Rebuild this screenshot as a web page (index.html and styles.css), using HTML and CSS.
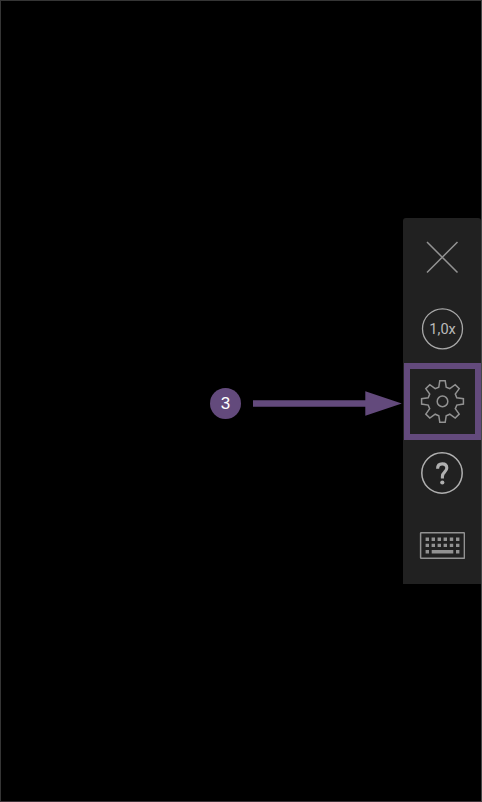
FILE: index.html
```html
<!DOCTYPE html>
<html lang="en">
<head>
<meta charset="utf-8">
<title>Toolbar</title>
<link rel="stylesheet" href="styles.css">
</head>
<body>
<main class="screen">
  <div class="callout">
    <span class="step">3</span>
    <svg class="arrow" width="149" height="25" viewBox="0 0 149 25"><path d="M0 9.2H112.3V0.3L148.8 12.5 112.3 24.7V15.8H0Z"/></svg>
  </div>
  <nav class="toolbar">
    <button class="tool" aria-label="Close">
      <svg width="46" height="46" viewBox="-23 -23 46 46"><path d="M-15 -15L15.5 15.5M15.5 -15L-15 15.5"/></svg>
    </button>
    <button class="tool">
      <svg class="zoom" width="46" height="46" viewBox="-23 -23 46 46"><circle cx=".5" cy="-.2" r="20"/><text x=".6" y="5">1,0x</text></svg>
    </button>
    <button class="tool selected" aria-label="Settings">
      <svg width="46" height="46" viewBox="-23 -23 46 46"><g transform="translate(.5 .4)"><path d="M-2.7-20.7H2.7L3.7-14.3 7.3-12.8 12.7-16.7 16.7-12.7 12.8-7.3 14.3-3.7 20.9-2.7V2.7L14.3 3.7 12.8 7.3 16.7 12.7 12.7 16.7 7.3 12.8 3.7 14.3 2.7 20.9H-2.7L-3.7 14.3-7.3 12.8-12.7 16.7-16.7 12.7-12.8 7.3-14.3 3.7-20.9 2.7V-2.7L-14.3-3.7-12.8-7.3-16.7-12.7-12.7-16.7-7.3-12.8-3.7-14.3Z"/><circle r="5.3"/></g></svg>
    </button>
    <button class="tool" aria-label="Help">
      <svg class="help" width="46" height="46" viewBox="-23 -23 46 46"><circle cx="0" cy="0" r="20.2"/><path class="mark" d="M-4.4-4.2C-4.4-7.3-2.5-9.1.3-9.1S4.8-7.4 4.8-4.9C4.8-1.2.4-1 .4 3.4V5.4"/><circle class="dot" cx=".3" cy="9.5" r="2.1"/></svg>
    </button>
    <button class="tool" aria-label="Keyboard">
      <svg width="46" height="46" viewBox="-23 -23 46 46"><rect x="-21.4" y="-12.3" width="43.8" height="25.6" rx=".6"/><path class="keys" d="M-16.4-5.7h3.4m2.6 0h3.4m2.6 0h3.4m2.6 0h3.4m2.8 0h3.4m2.8 0h3.4M-16.4.4h3.4m2.6 0h3.4m2.6 0h3.4m2.6 0h3.4m2.8 0h3.4m2.8 0h3.4M-16.4 6.7h3.4m2.7 0h21.6m2.7 0h3.4"/></svg>
    </button>
  </nav>
</main>
</body>
</html>
```
FILE: styles.css
```css
* { box-sizing: border-box; }
body { margin: 0; background: #000; }
.screen {
  width: 482px;
  height: 802px;
  display: flex;
  align-items: center;
  justify-content: flex-end;
  border: 1px solid #353535;
  border-right-color: #454747;
  border-bottom-color: #3c3238;
  background: #000;
}
.callout {
  display: flex;
  align-items: center;
  gap: 12px;
  margin-right: 1px;
  padding-top: 5px;
}
.step {
  width: 31px;
  height: 31px;
  border-radius: 50%;
  background: #634a7c;
  color: #fff;
  font: 17px/31px "Liberation Sans", Arial, sans-serif;
  text-align: center;
}
.arrow { display: block; fill: #634a7c; }
.toolbar {
  width: 78px;
  height: 366px;
  padding: 3px 0;
  border-radius: 3px 3px 0 0;
  background: #212121;
}
.tool {
  position: relative;
  display: flex;
  align-items: center;
  justify-content: center;
  width: 78px;
  height: 72px;
  margin: 0;
  padding: 0;
  border: 0;
  background: none;
}
.tool svg {
  display: block;
  fill: none;
  stroke: #929292;
  stroke-width: 1.5;
}
.tool .zoom { stroke: #a8a8a8; stroke-width: 1.3; }
.zoom text {
  fill: #bababa;
  stroke: none;
  font: 400 14.6px Roboto, sans-serif;
  text-anchor: middle;
}
.selected::after {
  content: "";
  position: absolute;
  inset: -2px 0 -3px 1px;
  border: 6px solid #634a7c;
}
.tool .help { stroke: #b0b0b0; }
.help .mark { stroke-width: 3.1; }
.help .dot { fill: #b0b0b0; stroke: none; }
.tool .keys { stroke-width: 3.4; }
```
